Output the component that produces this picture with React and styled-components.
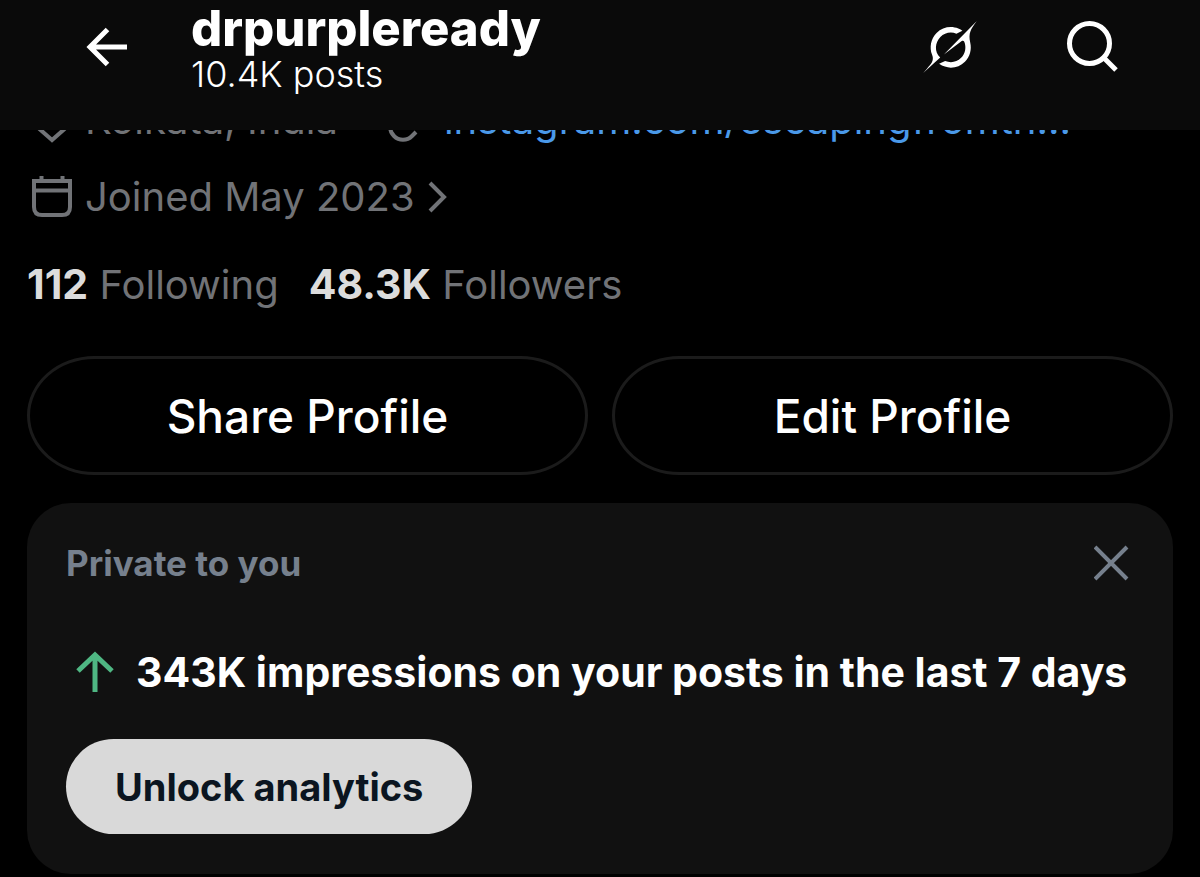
import React, { useState } from "react";
import styled, { createGlobalStyle } from "styled-components";

const GlobalStyle = createGlobalStyle`
  * {
    box-sizing: border-box;
  }
  body {
    margin: 0;
    background: #000;
    color: #fff;
    font-family: Inter, "Liberation Sans", sans-serif;
  }
  h1, h2, p {
    margin: 0;
  }
  svg {
    display: block;
    flex-shrink: 0;
  }
`;

const Header = styled.header`
  position: sticky;
  top: 0;
  z-index: 1;
  display: flex;
  align-items: center;
  padding: 0 81px 36px 83px;
  background: #0a0a0a;
`;

const IconButton = styled.button`
  display: flex;
  padding: 0;
  border: none;
  background: none;
  color: inherit;
  cursor: pointer;
`;

const Heading = styled.div`
  flex: 1;
  min-width: 0;
  margin-left: 64px;
  padding-top: 3px;
`;

const Name = styled.h1`
  font-size: 49px;
  font-weight: 800;
  line-height: 52px;
`;

const PostCount = styled.p`
  font-size: 36px;
  font-weight: 300;
  line-height: 39px;
`;

const Actions = styled.div`
  display: flex;
  align-items: center;
  gap: 90px;
`;

const Main = styled.main`
  margin-top: -36px;
  padding: 0 27px;
`;

const MetaRow = styled.div`
  display: flex;
  align-items: center;
  height: 52px;
  margin-bottom: 25px;
  padding-left: 4px;
  color: #717377;
  font-size: 40px;
  font-weight: 400;
  line-height: 52px;
  white-space: nowrap;
`;

const MetaItem = styled.div`
  display: flex;
  align-items: center;
  gap: 12px;
  margin-right: 50px;
`;

const JoinedButton = styled.button`
  display: flex;
  align-items: center;
  gap: 12px;
  padding: 0;
  border: none;
  background: none;
  color: inherit;
  font: inherit;
  cursor: pointer;
`;

const SiteLink = styled.a`
  color: #4a99e9;
  text-decoration: none;
`;

const Stats = styled.div`
  display: flex;
  gap: 30px;
  margin-top: 35px;
`;

const Stat = styled.a`
  color: #717377;
  font-size: 40px;
  font-weight: 400;
  line-height: 52px;
  text-decoration: none;
  white-space: nowrap;

  strong {
    color: #dcdcdc;
    font-size: 41px;
    font-weight: 700;
  }
`;

const ProfileButtons = styled.div`
  display: grid;
  grid-template-columns: 1fr 1fr;
  gap: 24px;
  margin-top: 45px;
`;

const OutlineButton = styled.button`
  height: 119px;
  border: 3px solid #1b1b1b;
  border-radius: 68px / 60px;
  background: #000;
  color: #fff;
  font-family: inherit;
  font-size: 46px;
  font-weight: 500;
  cursor: pointer;
`;

const Card = styled.section`
  margin-top: 28px;
  padding: 36px 39px 40px;
  border-radius: 44px;
  background: #111;
`;

const CardTop = styled.div`
  display: flex;
  align-items: center;
  justify-content: space-between;
  color: #76808d;
`;

const CardTitle = styled.h2`
  font-size: 35px;
  font-weight: 700;
  line-height: 48px;
`;

const Impressions = styled.p`
  display: flex;
  align-items: center;
  gap: 19px;
  margin: 59px 0 41px;
  padding-left: 7px;
  font-size: 41px;
  font-weight: 700;
  line-height: 52px;
  white-space: nowrap;
`;

const UnlockButton = styled.button`
  height: 95px;
  padding: 0 49px;
  border: none;
  border-radius: 48px;
  background: #d9d9d9;
  color: #0b1520;
  font-family: inherit;
  font-size: 38px;
  font-weight: 700;
  cursor: pointer;
`;

const BackIcon = () => (
  <svg width="44" height="44" viewBox="0 0 44 44" fill="none" stroke="currentColor" strokeWidth="5">
    <path d="M6 22H44M24.500 4.500L7 22L24.500 39.500" />
  </svg>
);

const GrokIcon = () => (
  <svg width="54" height="52" viewBox="0 0 33 32" fill="currentColor">
    <path d="M12.745 20.54l10.97-8.19c.539-.4 1.307-.244 1.564.38 1.349 3.288.746 7.241-1.938 9.955-2.683 2.714-6.417 3.31-9.83 1.954l-3.728 1.745c5.347 3.697 11.84 2.782 15.898-1.324 3.219-3.255 4.216-7.692 3.284-11.693l.008.009c-1.351-5.878.332-8.227 3.782-13.031L33 0l-4.54 4.59v-.014L12.743 20.544m-2.263 1.987c-3.837-3.707-3.175-9.446.1-12.755 2.42-2.449 6.388-3.448 9.852-1.979l3.72-1.737c-.67-.49-1.53-1.017-2.515-1.387-4.455-1.854-9.789-.931-13.41 2.728-3.483 3.523-4.579 8.94-2.697 13.561 1.405 3.454-.899 5.898-3.22 8.364C1.49 30.2.666 31.074 0 32l10.478-9.466" />
  </svg>
);

const SearchIcon = () => (
  <svg width="52" height="52" viewBox="0 0 52 52" fill="none" stroke="currentColor" strokeWidth="5">
    <circle cx="22.5" cy="22.5" r="20" />
    <path d="M36.5 36.5L49 49" />
  </svg>
);

const PinIcon = () => (
  <svg width="42" height="46" viewBox="0 0 42 46" fill="none" stroke="currentColor" strokeWidth="4">
    <path d="M21 43L8.500 32C5 28.500 3 24 3 19.500C3 10 11 3 21 3S39 10 39 19.500C39 24 37 28.500 33.500 32Z" />
    <circle cx="21" cy="19" r="6" />
  </svg>
);

// the two loops overlap in the middle, the lower one stays open on its right
const LinkIcon = () => (
  <svg width="44" height="44" viewBox="0 0 44 44" fill="none" stroke="currentColor" strokeWidth="4">
    <path d="M17 27C12 22 12 16 17 11L21 7C26 2 33 2 38 7S42 19 38 24L35 27" />
    <path d="M9 19L6 22C1 27 1 33 6 38C11 43 19 43 24 38L28 34" />
  </svg>
);

const CalendarIcon = () => (
  <svg width="42" height="42" viewBox="0 0 42 42" fill="none" stroke="currentColor" strokeWidth="4">
    <path d="M3 5H39V31Q39 39 31 39H11Q3 39 3 31Z" />
    <path d="M3 14.500H39M10.500 0V5M31.500 0V5" />
  </svg>
);

const ChevronIcon = () => (
  <svg width="26" height="32" viewBox="0 0 26 32" fill="none" stroke="currentColor" strokeWidth="4">
    <path d="M3 2L17 16L3 30" />
  </svg>
);

const CloseIcon = () => (
  <svg width="40" height="36" viewBox="0 0 40 36" fill="none" stroke="currentColor" strokeWidth="4">
    <path d="M1 2L33 34M33 2L1 34" />
  </svg>
);

const UpIcon = () => (
  <svg width="44" height="42" viewBox="0 0 44 42" fill="none" stroke="#4fb783" strokeWidth="5">
    <path d="M22 41V4M5 20L22 4L39 20" />
  </svg>
);

const AnalyticsCard = ({ onClose }) => (
  <Card>
    <CardTop>
      <CardTitle>Private to you</CardTitle>
      <IconButton type="button" aria-label="Close" onClick={onClose}>
        <CloseIcon />
      </IconButton>
    </CardTop>
    <Impressions>
      <UpIcon />
      343K impressions on your posts in the last 7 days
    </Impressions>
    <UnlockButton type="button">Unlock analytics</UnlockButton>
  </Card>
);

const App = () => {
  const [showCard, setShowCard] = useState(true);

  return (
    <>
      <GlobalStyle />
      <Header>
        <IconButton type="button" aria-label="Back">
          <BackIcon />
        </IconButton>
        <Heading>
          <Name>drpurpleready</Name>
          <PostCount>10.4K posts</PostCount>
        </Heading>
        <Actions>
          <IconButton type="button" aria-label="Grok">
            <GrokIcon />
          </IconButton>
          <IconButton type="button" aria-label="Search">
            <SearchIcon />
          </IconButton>
        </Actions>
      </Header>
      <Main>
        <MetaRow>
          <MetaItem>
            <PinIcon />
            Kolkata, India
          </MetaItem>
          <MetaItem>
            <LinkIcon />
            <SiteLink href="#site">instagram.com/escapingfromth...</SiteLink>
          </MetaItem>
        </MetaRow>
        <MetaRow>
          <JoinedButton type="button">
            <CalendarIcon />
            Joined May 2023
            <ChevronIcon />
          </JoinedButton>
        </MetaRow>
        <Stats>
          <Stat href="#following">
            <strong>112</strong> Following
          </Stat>
          <Stat href="#followers">
            <strong>48.3K</strong> Followers
          </Stat>
        </Stats>
        <ProfileButtons>
          <OutlineButton type="button">Share Profile</OutlineButton>
          <OutlineButton type="button">Edit Profile</OutlineButton>
        </ProfileButtons>
        {showCard && <AnalyticsCard onClose={() => setShowCard(false)} />}
      </Main>
    </>
  );
};

export default App;
